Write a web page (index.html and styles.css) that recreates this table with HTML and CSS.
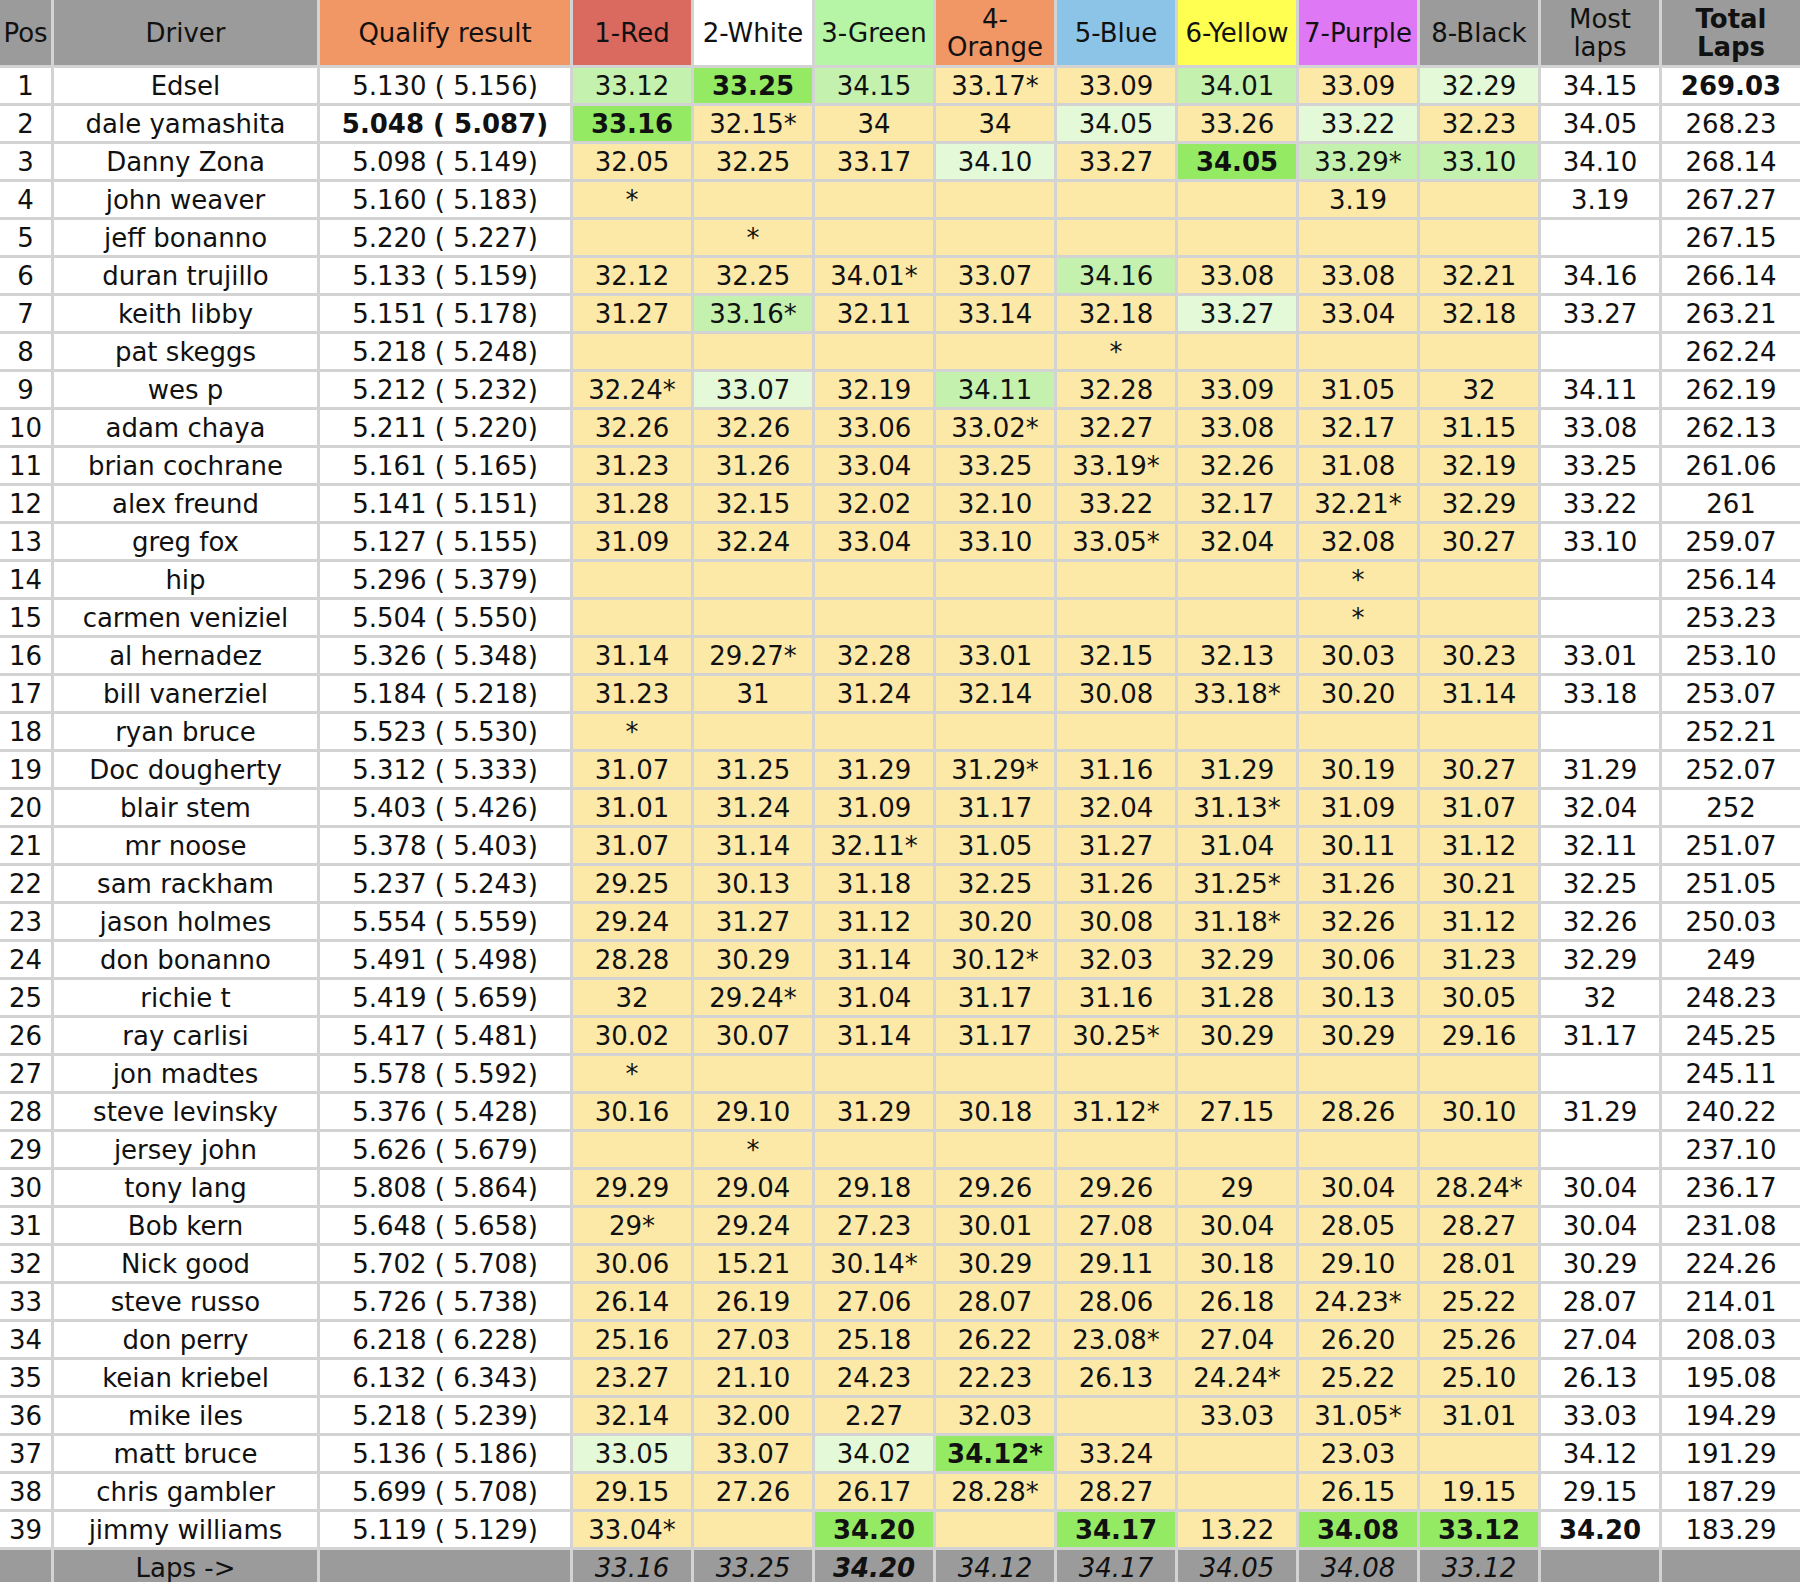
FILE: index.html
```html
<!DOCTYPE html>
<html lang="en">
<head>
<meta charset="utf-8">
<title>Race results</title>
<link rel="stylesheet" href="styles.css">
</head>
<body>
<div class="sheet">
  <div class="row head">
    <div class="c gray">Pos</div>
    <div class="c gray">Driver</div>
    <div class="c orange">Qualify result</div>
    <div class="c red">1-Red</div>
    <div class="c white">2-White</div>
    <div class="c green">3-Green</div>
    <div class="c orange two">4-<br>Orange</div>
    <div class="c blue">5-Blue</div>
    <div class="c yellow">6-Yellow</div>
    <div class="c purple">7-Purple</div>
    <div class="c gray">8-Black</div>
    <div class="c gray two">Most<br>laps</div>
    <div class="c gray two bold">Total<br>Laps</div>
  </div>

  <div class="row"><div class="c">1</div><div class="c">Edsel</div><div class="c">5.130 ( 5.156)</div><div class="c l b">33.12</div><div class="c l x">33.25</div><div class="c l b">34.15</div><div class="c l">33.17*</div><div class="c l">33.09</div><div class="c l b">34.01</div><div class="c l">33.09</div><div class="c l a">32.29</div><div class="c">34.15</div><div class="c bold">269.03</div></div>
  <div class="row"><div class="c">2</div><div class="c">dale yamashita</div><div class="c bold">5.048 ( 5.087)</div><div class="c l x">33.16</div><div class="c l">32.15*</div><div class="c l">34</div><div class="c l">34</div><div class="c l a">34.05</div><div class="c l">33.26</div><div class="c l a">33.22</div><div class="c l">32.23</div><div class="c">34.05</div><div class="c">268.23</div></div>
  <div class="row"><div class="c">3</div><div class="c">Danny Zona</div><div class="c">5.098 ( 5.149)</div><div class="c l">32.05</div><div class="c l">32.25</div><div class="c l">33.17</div><div class="c l a">34.10</div><div class="c l">33.27</div><div class="c l x">34.05</div><div class="c l b">33.29*</div><div class="c l b">33.10</div><div class="c">34.10</div><div class="c">268.14</div></div>
  <div class="row"><div class="c">4</div><div class="c">john weaver</div><div class="c">5.160 ( 5.183)</div><div class="c l">*</div><div class="c l"></div><div class="c l"></div><div class="c l"></div><div class="c l"></div><div class="c l"></div><div class="c l">3.19</div><div class="c l"></div><div class="c">3.19</div><div class="c">267.27</div></div>
  <div class="row"><div class="c">5</div><div class="c">jeff bonanno</div><div class="c">5.220 ( 5.227)</div><div class="c l"></div><div class="c l">*</div><div class="c l"></div><div class="c l"></div><div class="c l"></div><div class="c l"></div><div class="c l"></div><div class="c l"></div><div class="c"></div><div class="c">267.15</div></div>
  <div class="row"><div class="c">6</div><div class="c">duran trujillo</div><div class="c">5.133 ( 5.159)</div><div class="c l">32.12</div><div class="c l">32.25</div><div class="c l">34.01*</div><div class="c l">33.07</div><div class="c l b">34.16</div><div class="c l">33.08</div><div class="c l">33.08</div><div class="c l">32.21</div><div class="c">34.16</div><div class="c">266.14</div></div>
  <div class="row"><div class="c">7</div><div class="c">keith libby</div><div class="c">5.151 ( 5.178)</div><div class="c l">31.27</div><div class="c l b">33.16*</div><div class="c l">32.11</div><div class="c l">33.14</div><div class="c l">32.18</div><div class="c l a">33.27</div><div class="c l">33.04</div><div class="c l">32.18</div><div class="c">33.27</div><div class="c">263.21</div></div>
  <div class="row"><div class="c">8</div><div class="c">pat skeggs</div><div class="c">5.218 ( 5.248)</div><div class="c l"></div><div class="c l"></div><div class="c l"></div><div class="c l"></div><div class="c l">*</div><div class="c l"></div><div class="c l"></div><div class="c l"></div><div class="c"></div><div class="c">262.24</div></div>
  <div class="row"><div class="c">9</div><div class="c">wes p</div><div class="c">5.212 ( 5.232)</div><div class="c l">32.24*</div><div class="c l a">33.07</div><div class="c l">32.19</div><div class="c l b">34.11</div><div class="c l">32.28</div><div class="c l">33.09</div><div class="c l">31.05</div><div class="c l">32</div><div class="c">34.11</div><div class="c">262.19</div></div>
  <div class="row"><div class="c">10</div><div class="c">adam chaya</div><div class="c">5.211 ( 5.220)</div><div class="c l">32.26</div><div class="c l">32.26</div><div class="c l">33.06</div><div class="c l">33.02*</div><div class="c l">32.27</div><div class="c l">33.08</div><div class="c l">32.17</div><div class="c l">31.15</div><div class="c">33.08</div><div class="c">262.13</div></div>
  <div class="row"><div class="c">11</div><div class="c">brian cochrane</div><div class="c">5.161 ( 5.165)</div><div class="c l">31.23</div><div class="c l">31.26</div><div class="c l">33.04</div><div class="c l">33.25</div><div class="c l">33.19*</div><div class="c l">32.26</div><div class="c l">31.08</div><div class="c l">32.19</div><div class="c">33.25</div><div class="c">261.06</div></div>
  <div class="row"><div class="c">12</div><div class="c">alex freund</div><div class="c">5.141 ( 5.151)</div><div class="c l">31.28</div><div class="c l">32.15</div><div class="c l">32.02</div><div class="c l">32.10</div><div class="c l">33.22</div><div class="c l">32.17</div><div class="c l">32.21*</div><div class="c l">32.29</div><div class="c">33.22</div><div class="c">261</div></div>
  <div class="row"><div class="c">13</div><div class="c">greg fox</div><div class="c">5.127 ( 5.155)</div><div class="c l">31.09</div><div class="c l">32.24</div><div class="c l">33.04</div><div class="c l">33.10</div><div class="c l">33.05*</div><div class="c l">32.04</div><div class="c l">32.08</div><div class="c l">30.27</div><div class="c">33.10</div><div class="c">259.07</div></div>
  <div class="row"><div class="c">14</div><div class="c">hip</div><div class="c">5.296 ( 5.379)</div><div class="c l"></div><div class="c l"></div><div class="c l"></div><div class="c l"></div><div class="c l"></div><div class="c l"></div><div class="c l">*</div><div class="c l"></div><div class="c"></div><div class="c">256.14</div></div>
  <div class="row"><div class="c">15</div><div class="c">carmen veniziel</div><div class="c">5.504 ( 5.550)</div><div class="c l"></div><div class="c l"></div><div class="c l"></div><div class="c l"></div><div class="c l"></div><div class="c l"></div><div class="c l">*</div><div class="c l"></div><div class="c"></div><div class="c">253.23</div></div>
  <div class="row"><div class="c">16</div><div class="c">al hernadez</div><div class="c">5.326 ( 5.348)</div><div class="c l">31.14</div><div class="c l">29.27*</div><div class="c l">32.28</div><div class="c l">33.01</div><div class="c l">32.15</div><div class="c l">32.13</div><div class="c l">30.03</div><div class="c l">30.23</div><div class="c">33.01</div><div class="c">253.10</div></div>
  <div class="row"><div class="c">17</div><div class="c">bill vanerziel</div><div class="c">5.184 ( 5.218)</div><div class="c l">31.23</div><div class="c l">31</div><div class="c l">31.24</div><div class="c l">32.14</div><div class="c l">30.08</div><div class="c l">33.18*</div><div class="c l">30.20</div><div class="c l">31.14</div><div class="c">33.18</div><div class="c">253.07</div></div>
  <div class="row"><div class="c">18</div><div class="c">ryan bruce</div><div class="c">5.523 ( 5.530)</div><div class="c l">*</div><div class="c l"></div><div class="c l"></div><div class="c l"></div><div class="c l"></div><div class="c l"></div><div class="c l"></div><div class="c l"></div><div class="c"></div><div class="c">252.21</div></div>
  <div class="row"><div class="c">19</div><div class="c">Doc dougherty</div><div class="c">5.312 ( 5.333)</div><div class="c l">31.07</div><div class="c l">31.25</div><div class="c l">31.29</div><div class="c l">31.29*</div><div class="c l">31.16</div><div class="c l">31.29</div><div class="c l">30.19</div><div class="c l">30.27</div><div class="c">31.29</div><div class="c">252.07</div></div>
  <div class="row"><div class="c">20</div><div class="c">blair stem</div><div class="c">5.403 ( 5.426)</div><div class="c l">31.01</div><div class="c l">31.24</div><div class="c l">31.09</div><div class="c l">31.17</div><div class="c l">32.04</div><div class="c l">31.13*</div><div class="c l">31.09</div><div class="c l">31.07</div><div class="c">32.04</div><div class="c">252</div></div>
  <div class="row"><div class="c">21</div><div class="c">mr noose</div><div class="c">5.378 ( 5.403)</div><div class="c l">31.07</div><div class="c l">31.14</div><div class="c l">32.11*</div><div class="c l">31.05</div><div class="c l">31.27</div><div class="c l">31.04</div><div class="c l">30.11</div><div class="c l">31.12</div><div class="c">32.11</div><div class="c">251.07</div></div>
  <div class="row"><div class="c">22</div><div class="c">sam rackham</div><div class="c">5.237 ( 5.243)</div><div class="c l">29.25</div><div class="c l">30.13</div><div class="c l">31.18</div><div class="c l">32.25</div><div class="c l">31.26</div><div class="c l">31.25*</div><div class="c l">31.26</div><div class="c l">30.21</div><div class="c">32.25</div><div class="c">251.05</div></div>
  <div class="row"><div class="c">23</div><div class="c">jason holmes</div><div class="c">5.554 ( 5.559)</div><div class="c l">29.24</div><div class="c l">31.27</div><div class="c l">31.12</div><div class="c l">30.20</div><div class="c l">30.08</div><div class="c l">31.18*</div><div class="c l">32.26</div><div class="c l">31.12</div><div class="c">32.26</div><div class="c">250.03</div></div>
  <div class="row"><div class="c">24</div><div class="c">don bonanno</div><div class="c">5.491 ( 5.498)</div><div class="c l">28.28</div><div class="c l">30.29</div><div class="c l">31.14</div><div class="c l">30.12*</div><div class="c l">32.03</div><div class="c l">32.29</div><div class="c l">30.06</div><div class="c l">31.23</div><div class="c">32.29</div><div class="c">249</div></div>
  <div class="row"><div class="c">25</div><div class="c">richie t</div><div class="c">5.419 ( 5.659)</div><div class="c l">32</div><div class="c l">29.24*</div><div class="c l">31.04</div><div class="c l">31.17</div><div class="c l">31.16</div><div class="c l">31.28</div><div class="c l">30.13</div><div class="c l">30.05</div><div class="c">32</div><div class="c">248.23</div></div>
  <div class="row"><div class="c">26</div><div class="c">ray carlisi</div><div class="c">5.417 ( 5.481)</div><div class="c l">30.02</div><div class="c l">30.07</div><div class="c l">31.14</div><div class="c l">31.17</div><div class="c l">30.25*</div><div class="c l">30.29</div><div class="c l">30.29</div><div class="c l">29.16</div><div class="c">31.17</div><div class="c">245.25</div></div>
  <div class="row"><div class="c">27</div><div class="c">jon madtes</div><div class="c">5.578 ( 5.592)</div><div class="c l">*</div><div class="c l"></div><div class="c l"></div><div class="c l"></div><div class="c l"></div><div class="c l"></div><div class="c l"></div><div class="c l"></div><div class="c"></div><div class="c">245.11</div></div>
  <div class="row"><div class="c">28</div><div class="c">steve levinsky</div><div class="c">5.376 ( 5.428)</div><div class="c l">30.16</div><div class="c l">29.10</div><div class="c l">31.29</div><div class="c l">30.18</div><div class="c l">31.12*</div><div class="c l">27.15</div><div class="c l">28.26</div><div class="c l">30.10</div><div class="c">31.29</div><div class="c">240.22</div></div>
  <div class="row"><div class="c">29</div><div class="c">jersey john</div><div class="c">5.626 ( 5.679)</div><div class="c l"></div><div class="c l">*</div><div class="c l"></div><div class="c l"></div><div class="c l"></div><div class="c l"></div><div class="c l"></div><div class="c l"></div><div class="c"></div><div class="c">237.10</div></div>
  <div class="row"><div class="c">30</div><div class="c">tony lang</div><div class="c">5.808 ( 5.864)</div><div class="c l">29.29</div><div class="c l">29.04</div><div class="c l">29.18</div><div class="c l">29.26</div><div class="c l">29.26</div><div class="c l">29</div><div class="c l">30.04</div><div class="c l">28.24*</div><div class="c">30.04</div><div class="c">236.17</div></div>
  <div class="row"><div class="c">31</div><div class="c">Bob kern</div><div class="c">5.648 ( 5.658)</div><div class="c l">29*</div><div class="c l">29.24</div><div class="c l">27.23</div><div class="c l">30.01</div><div class="c l">27.08</div><div class="c l">30.04</div><div class="c l">28.05</div><div class="c l">28.27</div><div class="c">30.04</div><div class="c">231.08</div></div>
  <div class="row"><div class="c">32</div><div class="c">Nick good</div><div class="c">5.702 ( 5.708)</div><div class="c l">30.06</div><div class="c l">15.21</div><div class="c l">30.14*</div><div class="c l">30.29</div><div class="c l">29.11</div><div class="c l">30.18</div><div class="c l">29.10</div><div class="c l">28.01</div><div class="c">30.29</div><div class="c">224.26</div></div>
  <div class="row"><div class="c">33</div><div class="c">steve russo</div><div class="c">5.726 ( 5.738)</div><div class="c l">26.14</div><div class="c l">26.19</div><div class="c l">27.06</div><div class="c l">28.07</div><div class="c l">28.06</div><div class="c l">26.18</div><div class="c l">24.23*</div><div class="c l">25.22</div><div class="c">28.07</div><div class="c">214.01</div></div>
  <div class="row"><div class="c">34</div><div class="c">don perry</div><div class="c">6.218 ( 6.228)</div><div class="c l">25.16</div><div class="c l">27.03</div><div class="c l">25.18</div><div class="c l">26.22</div><div class="c l">23.08*</div><div class="c l">27.04</div><div class="c l">26.20</div><div class="c l">25.26</div><div class="c">27.04</div><div class="c">208.03</div></div>
  <div class="row"><div class="c">35</div><div class="c">keian kriebel</div><div class="c">6.132 ( 6.343)</div><div class="c l">23.27</div><div class="c l">21.10</div><div class="c l">24.23</div><div class="c l">22.23</div><div class="c l">26.13</div><div class="c l">24.24*</div><div class="c l">25.22</div><div class="c l">25.10</div><div class="c">26.13</div><div class="c">195.08</div></div>
  <div class="row"><div class="c">36</div><div class="c">mike iles</div><div class="c">5.218 ( 5.239)</div><div class="c l">32.14</div><div class="c l">32.00</div><div class="c l">2.27</div><div class="c l">32.03</div><div class="c l"></div><div class="c l">33.03</div><div class="c l">31.05*</div><div class="c l">31.01</div><div class="c">33.03</div><div class="c">194.29</div></div>
  <div class="row"><div class="c">37</div><div class="c">matt bruce</div><div class="c">5.136 ( 5.186)</div><div class="c l a">33.05</div><div class="c l">33.07</div><div class="c l a">34.02</div><div class="c l x">34.12*</div><div class="c l">33.24</div><div class="c l"></div><div class="c l">23.03</div><div class="c l"></div><div class="c">34.12</div><div class="c">191.29</div></div>
  <div class="row"><div class="c">38</div><div class="c">chris gambler</div><div class="c">5.699 ( 5.708)</div><div class="c l">29.15</div><div class="c l">27.26</div><div class="c l">26.17</div><div class="c l">28.28*</div><div class="c l">28.27</div><div class="c l"></div><div class="c l">26.15</div><div class="c l">19.15</div><div class="c">29.15</div><div class="c">187.29</div></div>
  <div class="row"><div class="c">39</div><div class="c">jimmy williams</div><div class="c">5.119 ( 5.129)</div><div class="c l">33.04*</div><div class="c l"></div><div class="c l x">34.20</div><div class="c l"></div><div class="c l x">34.17</div><div class="c l">13.22</div><div class="c l x">34.08</div><div class="c l x">33.12</div><div class="c bold">34.20</div><div class="c">183.29</div></div>

  <div class="row foot">
    <div class="c gray"></div>
    <div class="c gray">Laps -&gt;</div>
    <div class="c gray"></div>
    <div class="c gray it">33.16</div>
    <div class="c gray it">33.25</div>
    <div class="c gray it bold">34.20</div>
    <div class="c gray it">34.12</div>
    <div class="c gray it">34.17</div>
    <div class="c gray it">34.05</div>
    <div class="c gray it">34.08</div>
    <div class="c gray it">33.12</div>
    <div class="c gray"></div>
    <div class="c gray"></div>
  </div>
</div>
</body>
</html>
```

FILE: styles.css
```css
html, body {
  margin: 0;
  padding: 0;
  background: #ffffff;
}

.sheet {
  width: 1800px;
  display: flex;
  flex-direction: column;
  gap: 3px;
  background: #d3d3d3;
  font-family: "DejaVu Sans", Verdana, sans-serif;
  font-size: 26px;
  color: #111111;
}

.row {
  display: grid;
  grid-template-columns: 51px 263px 250px repeat(9, 118px) 138px;
  column-gap: 3px;
  height: 35px;
}

.row.head {
  height: 65px;
}

.c {
  display: flex;
  align-items: center;
  justify-content: center;
  text-align: center;
  background: #ffffff;
  white-space: nowrap;
  overflow: hidden;
  line-height: 1;
}

.two {
  line-height: 28px;
  white-space: normal;
}

.bold { font-weight: bold; }
.it { font-style: italic; }

.gray   { background: #9b9b9b; }
.orange { background: #f19665; }
.red    { background: #da6a5f; }
.white  { background: #ffffff; }
.green  { background: #b6f5a5; }
.blue   { background: #8cc4e8; }
.yellow { background: #ffff52; }
.purple { background: #de78f5; }

.l   { background: #fce9a8; }
.l.a { background: #e3f9d7; }
.l.b { background: #c4f2ae; }
.l.x { background: #94ea62; font-weight: bold; }
```
